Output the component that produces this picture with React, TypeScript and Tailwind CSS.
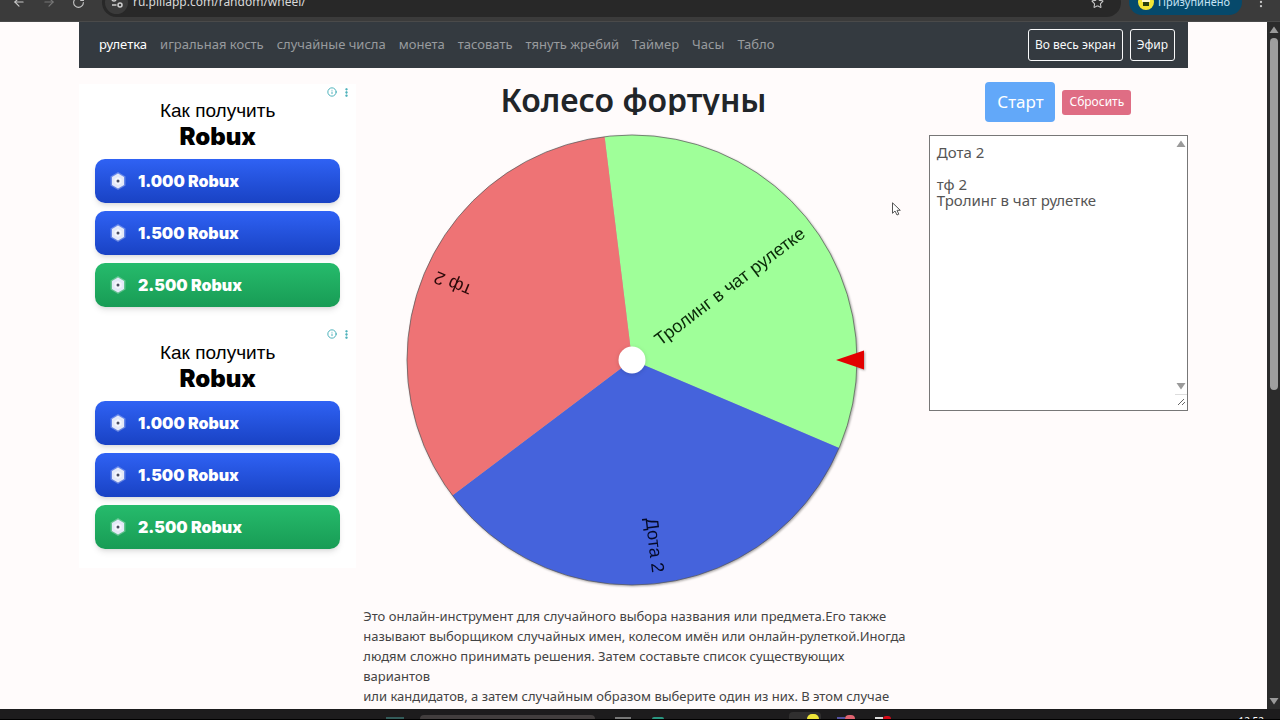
import { ArrowLeft, ArrowRight, Info, MoreVertical, RotateCw, Star } from "lucide-react";

const links = [
  "рулетка",
  "игральная кость",
  "случайные числа",
  "монета",
  "тасовать",
  "тянуть жребий",
  "Таймер",
  "Часы",
  "Табло",
];

const offers = [
  { label: "1.000 Robux", color: "from-[#2f62f4] to-[#1942c4]" },
  { label: "1.500 Robux", color: "from-[#2f62f4] to-[#1942c4]" },
  { label: "2.500 Robux", color: "from-[#26bb6c] to-[#189c55]" },
];

function BrowserBar() {
  return (
    <header className="flex h-[22px] shrink-0 items-end overflow-hidden border-b border-[#4a4a4a] bg-[#3b3b3b]">
      <div className="flex h-[38px] w-full shrink-0 items-center pr-3 pl-3 text-[#c7c7c7]">
        <button aria-label="Назад" className="mr-4"><ArrowLeft size={14} /></button>
        <button aria-label="Вперёд" className="mr-4 text-[#777]"><ArrowRight size={14} /></button>
        <button aria-label="Обновить" className="mr-[17px]"><RotateCw size={13} /></button>
        <div className="flex h-[29px] min-w-0 flex-1 items-center rounded-full bg-[#282828] pr-[17px] pl-[3px]">
          <span className="mr-[5px] flex size-[23px] items-center justify-center rounded-full bg-[#3b3b3b]">
            <svg width="12" height="12" viewBox="0 0 12 12" fill="none" stroke="#d0d0d0" strokeWidth="1.5">
              <circle cx="3" cy="3" r="2" />
              <path d="M6.5 3H11M1 9h4.500" />
              <circle cx="9" cy="9" r="2" />
            </svg>
          </span>
          <span className="flex-1 text-[12px] text-[#d9d9d9]">ru.piliapp.com/random/wheel/</span>
          <button aria-label="Добавить в закладки"><Star size={13} /></button>
        </div>
        <button className="mr-3 ml-2 flex h-[26px] items-center gap-1 rounded-full bg-[#06496b] pr-3 pl-[9px] text-[11px] text-[#c5e3f4]">
          <svg width="16" height="16" viewBox="0 0 16 16">
            <circle cx="8" cy="8" r="8" fill="#f2e635" />
            <path d="M4 4h8v4H4z" fill="#fffbd0" />
            <path d="M5 8h6v4H5z" fill="#27400f" />
          </svg>
          Призупинено
        </button>
        <button aria-label="Меню"><MoreVertical size={14} /></button>
      </div>
    </header>
  );
}

function RobuxIcon() {
  return (
    <svg width="16" height="18" viewBox="0 0 16 18">
      <path d="M8 0l7.500 4.500v9L8 18 .5 13.500v-9z" fill="#fff" fillOpacity=".3" />
      <path d="M8 1.500l6 3.500v8l-6 3.500L2 13V5z" fill="#e4e9f8" />
      <path d="M8 5l3.500 2v4L8 13l-3.500-2V7z" fill="#fff" fillOpacity=".6" />
      <circle cx="8" cy="9" r="1.500" fill="#4a4d60" />
    </svg>
  );
}

function Ad() {
  return (
    <section className="h-[242px] bg-white px-4 pt-[2px]">
      <div className="-mr-3 flex h-3 items-center justify-end gap-1 text-[#2ca3ae]">
        <Info size={10} />
        <MoreVertical size={11} strokeWidth={3} />
      </div>
      <h2 className="flex flex-col text-center text-black">
        <span className="font-['Liberation_Sans',sans-serif] text-[19px] leading-[26px] font-medium">Как получить</span>
        <span className="font-['Inter',sans-serif] text-[24px] leading-[26px] font-black">Robux</span>
      </h2>
      <div className="mt-[9px] flex flex-col gap-2">
        {offers.map((o) => (
          <a
            key={o.label}
            href="#"
            className={`flex h-11 items-center gap-3 rounded-[10px] bg-linear-to-b pl-[15px] font-['Inter',sans-serif] text-[16px] font-black text-white shadow-md ${o.color}`}
          >
            <RobuxIcon />
            {o.label}
          </a>
        ))}
      </div>
    </section>
  );
}

function Wheel() {
  const r = 225;
  const point = (deg: number) => {
    const a = (deg * Math.PI) / 180;
    return `${(r * Math.cos(a)).toFixed(2)} ${(r * Math.sin(a)).toFixed(2)}`;
  };
  const slices = [
    { label: "Тролинг в чат рулетке", mid: -37, fill: "#9fff99", ink: "#0a2a08" },
    { label: "Дота 2", mid: 83, fill: "#4563dc", ink: "#050a28" },
    { label: "тф 2", mid: 203, fill: "#ee7375", ink: "#2a0808" },
  ];
  return (
    <svg width="464" height="460" viewBox="-230 -228 464 460" role="img" aria-label="Колесо фортуны" className="drop-shadow-[1px_1px_1px_rgba(0,0,0,0.35)]">
      {slices.map((s) => (
        <path key={s.label} d={`M0 0L${point(s.mid - 60)}A${r} ${r} 0 0 1 ${point(s.mid + 60)}Z`} fill={s.fill} />
      ))}
      <circle r={r} fill="none" stroke="#555" strokeOpacity=".7" />
      {slices.map((s) => (
        <text
          key={s.label}
          transform={`rotate(${s.mid})`}
          x="214"
          y="6"
          textAnchor="end"
          fill={s.ink}
          className="font-['Liberation_Sans',sans-serif] text-[18px]"
        >
          {s.label}
        </text>
      ))}
      <circle r="13.500" fill="#fff" className="drop-shadow-sm" />
      <path d="M204 0L232 -9.500V9.500Z" fill="#e20000" />
    </svg>
  );
}

function Triangle({ up = false }: { up?: boolean }) {
  return (
    <svg width="10" height="8" viewBox="0 0 10 8" fill="#9a9a9a">
      <path d={up ? "M5 0.500L9.500 7H.5Z" : "M5 7.500L.5 1h9Z"} />
    </svg>
  );
}

function Entries() {
  return (
    <div className="relative">
      <textarea
        aria-label="Список вариантов"
        defaultValue={"Дота 2\n\nтф 2\nТролинг в чат рулетке"}
        className="block h-[276px] w-full resize-none overflow-hidden border border-[#777] bg-white px-[7px] py-2 text-[15px] leading-4 text-[#555]"
      />
      <div className="pointer-events-none absolute inset-y-px right-px flex w-3 flex-col items-center justify-between py-1">
        <Triangle up />
        <div className="flex flex-col items-center gap-1">
          <Triangle />
          <svg width="12" height="12" viewBox="0 0 12 12" fill="none" stroke="#666">
            <path d="M0 .5h12" stroke="#ddd" />
            <path d="M3 11L9 5M7 11l3-3" />
          </svg>
        </div>
      </div>
    </div>
  );
}

function Taskbar() {
  return (
    <footer className="flex h-[11px] shrink-0 items-end overflow-hidden border-b border-black bg-[#1d1c1d]">
      <span className="ml-[386px] h-[2px] w-[18px] bg-[#335c5a]" />
      <span className="ml-4 h-1 w-[175px] rounded-t-md bg-[#423e3e]" />
      <span className="ml-5 h-[2px] w-4 bg-[#777]" />
      <span className="ml-[21px] h-[2px] w-3 rounded-t bg-[#2a9781]" />
      <span className="ml-[125px] flex h-[7px] w-8 items-end justify-end rounded-t bg-[#302f2f] pr-[2px]">
        <span className="h-[5px] w-3 rounded-t-full bg-[#eee53a]" />
      </span>
      <span className="ml-4 h-[2px] w-2 bg-[#5452a0]" />
      <span className="h-1 w-[10px] rounded-t-full bg-[#df6470]" />
      <span className="ml-5 h-[2px] w-2 bg-[#ddd]" />
      <span className="h-[3px] w-2 rounded-t-full bg-[#d60b18]" />
      <span className="mr-4 ml-auto h-[3px] overflow-hidden text-[10px] leading-[10px] text-white">12:52</span>
    </footer>
  );
}

export default function App() {
  return (
    <div className="flex h-screen flex-col overflow-hidden bg-[#fffbfb] font-['Noto_Sans','Open_Sans',sans-serif] text-[#212529]">
      <BrowserBar />
      <div className="flex min-h-0 flex-1">
        <div className="min-w-0 flex-1 overflow-hidden px-[79px]">
          <nav className="flex h-[46px] items-center gap-[13px] bg-[#343a40] pr-[13px] pl-5 text-[13px] whitespace-nowrap text-[#989b9e]">
            {links.map((l, i) => (
              <a key={l} href="#" className={i === 0 ? "text-white" : ""}>{l}</a>
            ))}
            <div className="ml-auto flex gap-[7px] text-[12px] text-[#f8f9fa]">
              <button className="h-8 rounded-[3px] border border-[#f8f9fa] px-[6px]">Во весь экран</button>
              <button className="h-8 rounded-[3px] border border-[#f8f9fa] px-[6px]">Эфир</button>
            </div>
          </nav>
          <main className="grid grid-cols-[1fr_2fr_1fr]">
            <aside className="pt-4">
              <Ad />
              <Ad />
            </aside>
            <article className="min-w-0 px-[7px] pt-[14px]">
              <h1 className="h-[33px] overflow-hidden text-center text-[32px] leading-9 font-semibold">Колесо фортуны</h1>
              <div className="mt-[17px] flex justify-center">
                <Wheel />
              </div>
              <p className="mt-[14px] mr-[-2px] text-[13px] leading-5 text-[#444]">
                Это онлайн-инструмент для случайного выбора названия или предмета.Его также<br />
                называют выборщиком случайных имен, колесом имён или онлайн-рулеткой.Иногда<br />
                людям сложно принимать решения. Затем составьте список существующих вариантов<br />
                или кандидатов, а затем случайным образом выберите один из них. В этом случае вы<br />
                можете использовать наш инструмент для принятия решений. Просто и весело.Вы
              </p>
            </article>
            <aside className="min-w-0 pt-[14px] pl-[18px]">
              <div className="mb-[13px] flex h-10 items-center justify-center gap-[7px] text-white">
                <button className="h-10 w-[70px] rounded bg-[#62a8f9] text-[17px]">Старт</button>
                <button className="h-[25px] rounded-[3px] bg-[#df6d84] px-[7px] text-[12px]">Сбросить</button>
              </div>
              <Entries />
            </aside>
          </main>
        </div>
        <div className="flex w-[13px] shrink-0 flex-col items-center bg-[#2b2b2b] py-1">
          <Triangle up />
          <div className="mt-1 h-[352px] w-2 rounded-full bg-[#9e9e9e]" />
          <div className="mt-auto"><Triangle /></div>
        </div>
      </div>
      <Taskbar />
      <svg width="9" height="14" viewBox="0 0 9 14" className="pointer-events-none absolute top-[202px] left-[892px]" fill="#fff" stroke="#555">
        <path d="M.5.8v10.500L3 9l2 4 1.800-.8L5 8.300h3.300z" />
      </svg>
    </div>
  );
}
